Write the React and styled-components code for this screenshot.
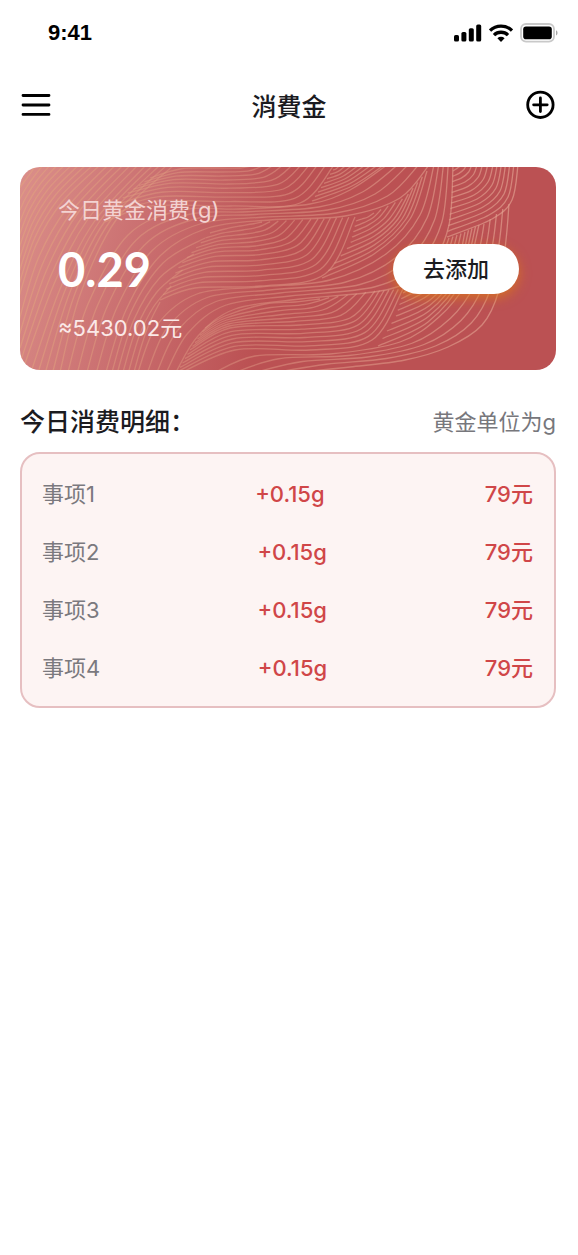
import React from "react";
import styled, { createGlobalStyle } from "styled-components";

const GlobalStyle = createGlobalStyle`
  * {
    box-sizing: border-box;
  }

  body {
    margin: 0;
    background: #fff;
    color: #1b1b1f;
    font-family: Inter, "Noto Sans CJK SC", sans-serif;
    font-size: 22px;
    line-height: 32px;
  }
`;

const Page = styled.div`
  min-height: 100vh;
  padding: 0 22px 40px 20px;
`;

const StatusBar = styled.div`
  display: flex;
  align-items: center;
  justify-content: space-between;
  height: 66px;
  padding-left: 28px;
  margin-right: -2px;
`;

const Time = styled.span`
  font-family: "Liberation Sans", Arial, sans-serif;
  font-size: 22px;
  font-weight: 700;
  color: #000;
`;

const StatusIcons = styled.div`
  display: flex;
  align-items: center;
  gap: 7px;
`;

const NavBar = styled.header`
  display: flex;
  align-items: center;
  justify-content: space-between;
  height: 78px;
`;

const Title = styled.h1`
  margin: 0;
  font-family: "Noto Sans CJK TC", sans-serif;
  font-size: 25px;
  font-weight: 500;
`;

const IconButton = styled.button`
  display: flex;
  padding: 0;
  border: 0;
  background: none;
  color: #000;
  cursor: pointer;
`;

// Red summary card
const Card = styled.section`
  position: relative;
  display: flex;
  align-items: center;
  justify-content: space-between;
  margin-top: 23px;
  padding: 27px 37px 26px 38px;
  border-radius: 20px;
  overflow: hidden;
  color: #fff;
  background: linear-gradient(105deg, #db8f8a 0%, #ca6f70 24%, #bb5153 48%);
`;

const WaveSvg = styled.svg`
  position: absolute;
  inset: 0;
  width: 100%;
  height: 100%;
`;

const Summary = styled.div`
  position: relative;
`;

const SummaryLabel = styled.div`
  color: #f3d3d2;
`;

const SummaryAmount = styled.div`
  margin: 15px 0;
  font-family: Lato, sans-serif;
  font-size: 47px;
  font-weight: 700;
  line-height: 56px;
`;

const SummaryValue = styled.div`
  color: #fbe9e8;
`;

const AddButton = styled.button`
  position: relative;
  height: 50px;
  padding: 0 30px;
  border: 0;
  border-radius: 25px;
  background: #fff;
  color: #1b1b1f;
  font: inherit;
  font-weight: 500;
  cursor: pointer;
  box-shadow: 0 4px 12px rgba(222, 122, 20, 0.7);
`;

const SectionHead = styled.div`
  display: flex;
  align-items: center;
  justify-content: space-between;
  margin-top: 36px;
`;

const SectionTitle = styled.h2`
  margin: 0;
  font-size: 25px;
  font-weight: 500;
`;

const Unit = styled.span`
  color: #77777c;
`;

const List = styled.div`
  margin-top: 14px;
  padding: 11px 21px 9px 20px;
  border: 2px solid #e6bfc1;
  border-radius: 20px;
  background: #fdf4f3;
`;

const Table = styled.table`
  display: block;
  width: 100%;

  tbody {
    display: block;
  }
`;

const Row = styled.tr`
  display: flex;
  align-items: center;
  justify-content: space-between;
  height: 58px;
`;

const Cell = styled.td`
  padding: 0;
  font-weight: ${(props) => (props.$accent ? 500 : 400)};
  color: ${(props) => (props.$accent ? "#d04648" : "#7b797e")};
`;

// Each band is drawn by blending between its guide curves
const bands = [
  { count: 10, guides: [
    [[18, 190], [24, 182], [30, 174], [36, 165]],
    [[18, 300], [36, 245], [62, 202], [100, 165]],
  ] },
  { count: 5, guides: [
    [[18, 324], [38, 259], [67, 208], [108, 165]],
    [[22, 372], [54, 284], [88, 219], [138, 165]],
  ] },
  { count: 5, guides: [
    [[31, 372], [60, 289], [94, 222], [146, 165]],
    [[60, 372], [80, 295], [116, 220], [174, 165]],
  ] },
  { count: 10, guides: [
    [[150, 178], [180, 169], [215, 168], [240, 168], [255, 165]],
    [[125, 195], [170, 185], [230, 186], [275, 182], [297, 165]],
    [[105, 222], [150, 206], [230, 206], [300, 203], [334, 165]],
  ] },
  { count: 5, guides: [
    [[68, 372], [88, 304], [128, 235], [182, 210], [240, 209], [310, 204], [350, 190], [387, 165]],
    [[106, 372], [126, 310], [160, 256], [208, 228], [270, 220], [345, 216], [400, 198], [429, 165]],
  ] },
  { count: 8, guides: [
    [[333, 170], [336, 169], [340, 165]],
    [[312, 201], [352, 186], [384, 165]],
  ] },
  { count: 5, guides: [
    [[112, 372], [131, 312], [163, 263], [205, 238]],
    [[134, 372], [142, 344], [150, 322], [160, 302]],
  ] },
  { count: 14, guides: [
    [[210, 233], [225, 229], [240, 226], [252, 224], [262, 222]],
    [[180, 265], [215, 254], [260, 252], [295, 243], [315, 219]],
    [[160, 300], [195, 288], [260, 286], [325, 274], [355, 217]],
  ] },
  { count: 5, guides: [
    [[138, 372], [157, 325], [197, 294], [260, 287], [330, 280], [386, 254], [420, 215], [434, 165]],
    [[176, 372], [198, 336], [235, 309], [300, 299], [390, 289], [430, 265], [449, 225], [453, 165]],
  ] },
  { count: 10, guides: [
    [[356, 221], [362, 219], [368, 217], [374, 213]],
    [[350, 245], [374, 234], [392, 219], [406, 197]],
    [[322, 278], [374, 254], [410, 219], [427, 171]],
  ] },
  { count: 13, guides: [
    [[205, 328], [225, 316], [265, 304], [295, 302], [320, 299]],
    [[190, 350], [230, 328], [300, 325], [350, 318], [375, 291]],
    [[175, 376], [235, 350], [310, 350], [372, 340], [403, 289]],
  ] },
  { count: 5, guides: [
    [[212, 374], [255, 356], [330, 354], [400, 342], [440, 316], [466, 284], [479, 250], [484, 224]],
    [[290, 373], [350, 367], [405, 360], [448, 347], [482, 325], [499, 290], [506, 240], [509, 204]],
  ] },
  { count: 9, guides: [
    [[403, 293], [424, 280], [440, 260], [449, 238]],
    [[396, 316], [430, 300], [455, 270], [465, 232]],
    [[378, 346], [428, 322], [464, 278], [479, 225]],
  ] },
  { count: 13, guides: [
    [[453, 171], [456, 169], [459, 167], [461, 165]],
    [[451, 203], [474, 195], [488, 182], [493, 165]],
    [[447, 237], [492, 219], [512, 200], [518, 165]],
  ] },
];

const blend = (guides, t) => {
  const pos = t * (guides.length - 1);
  const i = Math.min(Math.floor(pos), guides.length - 2);
  const k = pos - i;
  return guides[i].map(([x, y], n) => [
    x + (guides[i + 1][n][0] - x) * k,
    y + (guides[i + 1][n][1] - y) * k,
  ]);
};

const smoothPath = (pts) => {
  let d = `M${pts[0].join(" ")}`;
  for (let i = 0; i < pts.length - 1; i++) {
    const p0 = pts[i - 1] || pts[i];
    const p1 = pts[i];
    const p2 = pts[i + 1];
    const p3 = pts[i + 2] || p2;
    d += `C${p1[0] + (p2[0] - p0[0]) / 6} ${p1[1] + (p2[1] - p0[1]) / 6} ${
      p2[0] - (p3[0] - p1[0]) / 6
    } ${p2[1] - (p3[1] - p1[1]) / 6} ${p2[0]} ${p2[1]}`;
  }
  return d;
};

const Waves = () => (
  <WaveSvg
    viewBox="20 167 536 203"
    preserveAspectRatio="xMidYMid slice"
    aria-hidden="true"
  >
    <defs>
      <linearGradient
        id="wave"
        gradientUnits="userSpaceOnUse"
        x1="20"
        y1="0"
        x2="520"
        y2="0"
      >
        <stop offset="0" stopColor="#e2a67c" stopOpacity="0.5" />
        <stop offset="0.4" stopColor="#dd9480" stopOpacity="0.48" />
        <stop offset="1" stopColor="#e3a392" stopOpacity="0.65" />
      </linearGradient>
    </defs>
    <g fill="none" stroke="url(#wave)" strokeWidth="1.3">
      {bands.map(({ count, guides }, b) =>
        Array.from({ length: count }, (_, i) => (
          <path
            key={`${b}-${i}`}
            d={smoothPath(blend(guides, i / (count - 1)))}
          />
        ))
      )}
    </g>
  </WaveSvg>
);

const SignalIcon = () => (
  <svg width="28" height="18" viewBox="0 0 28 18" aria-hidden="true">
    <rect x="0" y="11" width="5" height="6.5" rx="1.6" />
    <rect x="7.4" y="8" width="5" height="9.5" rx="1.6" />
    <rect x="14.8" y="4.2" width="5" height="13.3" rx="1.6" />
    <rect x="22.2" y="0.5" width="5" height="17" rx="1.6" />
  </svg>
);

const WifiIcon = () => (
  <svg width="24" height="18" viewBox="0 0 24 18" aria-hidden="true">
    <g fill="none" stroke="#000" strokeWidth="3.3">
      <path d="M1 6.600a15.600 15.600 0 0 1 22 0" />
      <path d="M5 11.100a10 10 0 0 1 14 0" />
    </g>
    <path d="M8.400 14.200a5.300 5.300 0 0 1 7.200 0L12 17.900z" />
  </svg>
);

const BatteryIcon = () => (
  <svg width="38" height="20" viewBox="0 0 38 20" aria-hidden="true">
    <rect
      x="1"
      y="1"
      width="33"
      height="17.6"
      rx="5"
      fill="none"
      stroke="#c9c9c9"
      strokeWidth="1.8"
    />
    <rect x="3.2" y="3.4" width="28.6" height="12.8" rx="2.8" />
    <path d="M36 7.200c2 .8 2 4.400 0 5.200z" fill="#a8a8a8" />
  </svg>
);

const MenuIcon = () => (
  <svg width="32" height="30" viewBox="0 0 32 30" aria-hidden="true">
    <path
      d="M3 5.500h26M3 15h26M3 24.400h26"
      stroke="#000"
      strokeWidth="2.8"
      strokeLinecap="round"
    />
  </svg>
);

const PlusIcon = () => (
  <svg width="30" height="30" viewBox="0 0 30 30" aria-hidden="true">
    <g fill="none" stroke="#000" strokeWidth="2.8" strokeLinecap="round">
      <circle cx="14.4" cy="14.8" r="12.7" />
      <path d="M14.400 8v13.600M7.600 14.800h13.600" />
    </g>
  </svg>
);

const items = [
  { name: "事项1", gold: "+0.15g", price: "79元" },
  { name: "事项2", gold: "+0.15g", price: "79元" },
  { name: "事项3", gold: "+0.15g", price: "79元" },
  { name: "事项4", gold: "+0.15g", price: "79元" },
];

const App = () => {
  return (
    <>
      <GlobalStyle />
      <Page>
        <StatusBar>
          <Time>9:41</Time>
          <StatusIcons>
            <SignalIcon />
            <WifiIcon />
            <BatteryIcon />
          </StatusIcons>
        </StatusBar>
        <NavBar>
          <IconButton type="button" aria-label="菜单">
            <MenuIcon />
          </IconButton>
          <Title>消費金</Title>
          <IconButton type="button" aria-label="添加">
            <PlusIcon />
          </IconButton>
        </NavBar>
        <main>
          <Card>
            <Waves />
            <Summary>
              <SummaryLabel>今日黄金消费(g)</SummaryLabel>
              <SummaryAmount>0.29</SummaryAmount>
              <SummaryValue>≈5430.02元</SummaryValue>
            </Summary>
            <AddButton type="button">去添加</AddButton>
          </Card>
          <SectionHead>
            <SectionTitle>今日消费明细：</SectionTitle>
            <Unit>黄金单位为g</Unit>
          </SectionHead>
          <List>
            <Table>
              <tbody>
                {items.map((item) => (
                  <Row key={item.name}>
                    <Cell>{item.name}</Cell>
                    <Cell $accent>{item.gold}</Cell>
                    <Cell $accent>{item.price}</Cell>
                  </Row>
                ))}
              </tbody>
            </Table>
          </List>
        </main>
      </Page>
    </>
  );
};

export default App;
